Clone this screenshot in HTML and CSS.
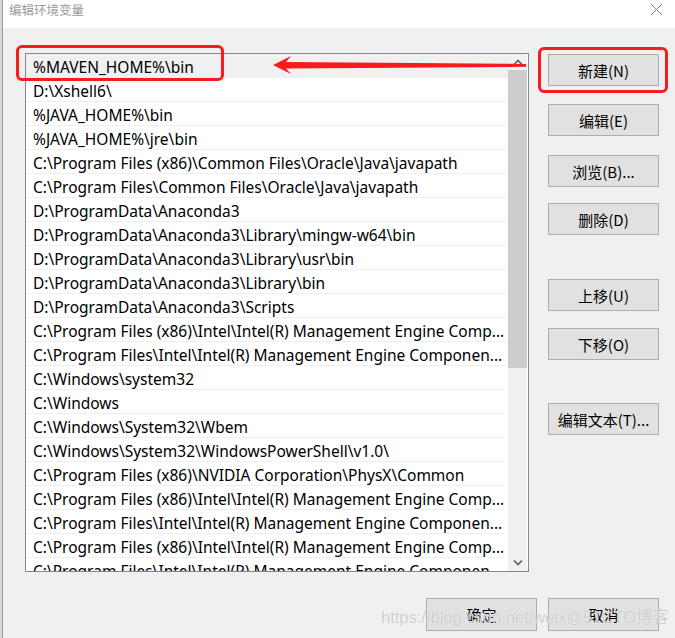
FILE: index.html
```html
<!DOCTYPE html>
<html lang="zh-CN">
<head>
<meta charset="utf-8">
<title>编辑环境变量</title>
<link rel="stylesheet" href="styles.css">
</head>
<body>
<div class="frame">
  <div class="desk"></div>
  <div class="win">
    <div class="titlebar">
      <span class="title">编辑环境变量</span>
      <svg class="close" width="13" height="13" viewBox="0 0 13 13"><path d="M1 1 L12 12 M12 1 L1 12" stroke="#808080" stroke-width="1" fill="none"/></svg>
    </div>
    <div class="content">
      <div class="listbox">
        <div class="rows">
          <div class="row sel">%MAVEN_HOME%\bin</div>
          <div class="row">D:\Xshell6\</div>
          <div class="row">%JAVA_HOME%\bin</div>
          <div class="row">%JAVA_HOME%\jre\bin</div>
          <div class="row">C:\Program Files (x86)\Common Files\Oracle\Java\javapath</div>
          <div class="row">C:\Program Files\Common Files\Oracle\Java\javapath</div>
          <div class="row">D:\ProgramData\Anaconda3</div>
          <div class="row">D:\ProgramData\Anaconda3\Library\mingw-w64\bin</div>
          <div class="row">D:\ProgramData\Anaconda3\Library\usr\bin</div>
          <div class="row">D:\ProgramData\Anaconda3\Library\bin</div>
          <div class="row">D:\ProgramData\Anaconda3\Scripts</div>
          <div class="row">C:\Program Files (x86)\Intel\Intel(R) Management Engine Comp...</div>
          <div class="row">C:\Program Files\Intel\Intel(R) Management Engine Componen...</div>
          <div class="row">C:\Windows\system32</div>
          <div class="row">C:\Windows</div>
          <div class="row">C:\Windows\System32\Wbem</div>
          <div class="row">C:\Windows\System32\WindowsPowerShell\v1.0\</div>
          <div class="row">C:\Program Files (x86)\NVIDIA Corporation\PhysX\Common</div>
          <div class="row">C:\Program Files (x86)\Intel\Intel(R) Management Engine Comp...</div>
          <div class="row">C:\Program Files\Intel\Intel(R) Management Engine Componen...</div>
          <div class="row">C:\Program Files (x86)\Intel\Intel(R) Management Engine Comp...</div>
          <div class="row">C:\Program Files\Intel\Intel(R) Management Engine Componen...</div>
        </div>
        <div class="scrollbar">
          <div class="sb-btn"><svg width="10" height="6" viewBox="0 0 10 6"><path d="M1 5.5 L5 1.5 L9 5.5" stroke="#606060" stroke-width="1.6" fill="none"/></svg></div>
          <div class="thumb"></div>
          <div class="track"></div>
          <div class="sb-btn"><svg width="10" height="6" viewBox="0 0 10 6"><path d="M1 0.5 L5 4.5 L9 0.5" stroke="#606060" stroke-width="1.6" fill="none"/></svg></div>
        </div>
      </div>
      <div class="side">
        <button class="btn b-new">新建(N)</button>
        <button class="btn b-edit">编辑(E)</button>
        <button class="btn b-browse">浏览(B)...</button>
        <button class="btn b-del">删除(D)</button>
        <button class="btn b-up">上移(U)</button>
        <button class="btn b-down">下移(O)</button>
        <button class="btn b-text">编辑文本(T)...</button>
      </div>
    </div>
    <div class="footer">
      <button class="btn">确定</button>
      <button class="btn">取消</button>
    </div>
  </div>

  <div class="mark mark-row"></div>
  <div class="mark mark-new"></div>
  <svg class="arrow" width="260" height="30" viewBox="0 0 260 30"><polygon points="3,15 21,6 16,12 256,14 256,16.8 16,18.5 21,24" fill="#f41c1c"/></svg>
  <div class="watermark">https://blog.csdn.net/weix@51CTO博客</div>
</div>
</body>
</html>
```

FILE: styles.css
```css
* { box-sizing: border-box; }
html, body { margin: 0; padding: 0; }
body {
  background: #f0f0f0;
  overflow: hidden;
  font-family: "Noto Sans", "Noto Sans CJK SC", sans-serif;
}
.frame {
  position: relative;
  width: 675px;
  height: 638px;
  display: flex;
}
.desk {
  width: 2px;
  background: #d8d8d8;
}
.win {
  flex: 1;
  display: flex;
  flex-direction: column;
  border-left: 1px solid #9a9a9a;
  background: #f0f0f0;
}
.titlebar {
  height: 28px;
  background: #fff;
  display: flex;
  align-items: flex-start;
  justify-content: space-between;
  padding: 1px 12px 0 6px;
}
.title {
  font-family: "Noto Sans CJK SC", sans-serif;
  font-size: 12.5px;
  line-height: 17px;
  color: #9a9a9a;
}
.close { margin-top: 2px; }
.content {
  display: flex;
  padding: 25px 0 0 22px;
  gap: 19px;
}
.listbox {
  width: 504px;
  height: 519px;
  border: 1px solid #828790;
  background: #fff;
  display: flex;
  overflow: hidden;
}
.rows {
  flex: 1;
  overflow: hidden;
}
.row {
  height: 24px;
  line-height: 24px;
  padding-top: 1px;
  border-bottom: 1px solid #f0f0f0;
  padding-left: 7px;
  font-size: 15.5px;
  color: #000;
  white-space: nowrap;
  overflow: hidden;
}
.row.sel { background: #f0f0f0; }
.scrollbar {
  width: 19px;
  margin-right: 1px;
  background: #f0f0f0;
  display: flex;
  flex-direction: column;
}
.sb-btn {
  height: 16px;
  display: flex;
  align-items: center;
  justify-content: center;
}
.thumb {
  height: 298px;
  background: #cdcdcd;
}
.track { flex: 1; }
.side {
  width: 111px;
  display: flex;
  flex-direction: column;
}
.btn {
  width: 111px;
  height: 32px;
  background: #e1e1e1;
  border: 1px solid #adadad;
  border-radius: 0;
  padding: 0;
  font-family: "Noto Sans CJK SC", sans-serif;
  font-size: 15px;
  color: #000;
}
.b-new { margin-top: 1px; }
.b-edit { margin-top: 18px; }
.b-browse { margin-top: 19px; }
.b-del { margin-top: 16px; }
.b-up { margin-top: 44px; }
.b-down { margin-top: 17px; }
.b-text { margin-top: 43px; }
.footer {
  display: flex;
  justify-content: flex-end;
  gap: 11px;
  padding-right: 16px;
  margin-top: 26px;
}
.footer .btn { height: 33px; }
.mark {
  position: absolute;
  border: 3px solid #f41c1c;
  border-radius: 6px;
}
.mark-row { left: 16px; top: 45px; width: 208px; height: 36px; }
.mark-new { left: 538px; top: 47px; width: 130px; height: 46px; }
.arrow { position: absolute; left: 270px; top: 50px; }
.watermark {
  position: absolute;
  left: 381px;
  top: 604px;
  font-family: "Liberation Sans", Arial, "Noto Sans CJK SC", sans-serif;
  font-size: 16.5px;
  color: rgba(190, 190, 190, 0.75);
  text-shadow: 0 0 1px #fff;
  white-space: nowrap;
  pointer-events: none;
}
```
